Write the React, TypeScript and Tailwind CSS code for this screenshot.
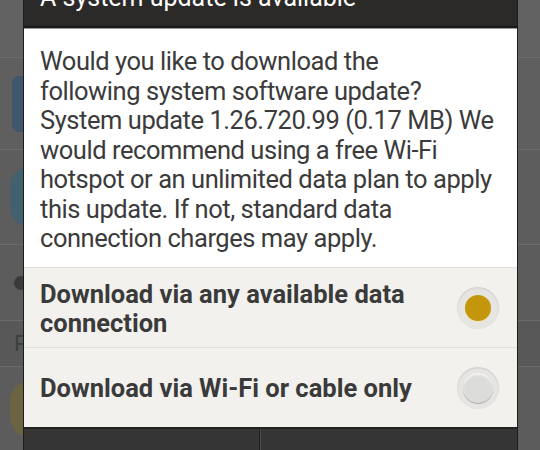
import React from "react";

const font = { fontFamily: "Roboto, 'Noto Sans', sans-serif" };

function BackgroundList() {
  return (
    <div className="flex h-full flex-col bg-[#5e5e5e]">
      <div className="h-[58px] border-b border-[#6c6c6c] bg-[#626262]" />
      <div className="flex h-[92px] items-center border-b border-[#6c6c6c] bg-[#5f5f5f] pl-[12px]">
        <div className="h-[56px] w-[40px] rounded-[8px] bg-[#3f566c]" />
      </div>
      <div className="flex h-[95px] items-center border-b border-[#6c6c6c] bg-[#5d5d5d] pl-[10px]">
        <div className="h-[60px] w-[40px] rounded-full bg-[#43606f]" />
      </div>
      <div className="flex h-[76px] items-center border-b border-[#6a6a6a] bg-[#5c5c5c] pl-[14px]">
        <div className="h-[14px] w-[14px] rounded-full bg-[#3a3a3a]" />
      </div>
      <div className="flex h-[46px] items-center border-b border-[#6a6a6a] bg-[#585858] pl-[14px] text-[22px] text-[#3e3e3e]" style={font}>
        P
      </div>
      <div className="flex flex-1 items-center bg-[#5c5c5c] pl-[10px]">
        <div className="h-[56px] w-[40px] rounded-full bg-[#6a6440]" />
      </div>
    </div>
  );
}

function Radio({ checked }: { checked: boolean }) {
  return (
    <div className="flex h-[42px] w-[42px] shrink-0 items-center justify-center rounded-full bg-[#e6e5e2] shadow-[inset_0_1px_2px_rgba(0,0,0,0.12)]">
      {checked ? (
        <div className="h-[26px] w-[26px] rounded-full bg-[#c3960b] shadow-[0_1px_0_#f2e3a6]" />
      ) : (
        <div className="h-[30px] w-[30px] rounded-full bg-[#dcdcdb] shadow-[0_1px_1px_rgba(0,0,0,0.25),inset_0_2px_2px_#f4f4f4]" />
      )}
    </div>
  );
}

export default function App() {
  return (
    <div className="relative h-[450px] w-[540px] overflow-hidden" style={font}>
      <BackgroundList />
      <div className="absolute inset-y-0 left-[23px] flex w-[495px] flex-col border-x border-[#1c1c1c] bg-white">
        <div className="h-[28px] shrink-0 overflow-hidden border-b-2 border-[#1a1a1a] bg-[#2c2a28] pl-[16px]">
          <div className="mt-[-14px] text-[25px] leading-[24px] text-white">A system update is available</div>
        </div>
        <div className="h-[1px] bg-[#9a9a9a]" />
        <div className="flex h-[238px] shrink-0 flex-col bg-white pl-[16px] pr-[20px] pt-[18px] text-[25.5px] leading-[29.5px] tracking-[-0.45px] text-[#3b3b3b]">
          <p>
            Would you like to download the
            <br />
            following system software update?
          </p>
          <p>
            System update 1.26.720.99 (0.17 MB) We would recommend using a free Wi-Fi hotspot or an unlimited data plan to apply this
            update. If not, standard data connection charges may apply.
          </p>
        </div>
        <div className="flex h-[81px] shrink-0 items-center justify-between border-y border-[#e2e1de] bg-[#f2f1ee] pl-[16px] pr-[18px]">
          <div className="pt-[3px] text-[25.5px] font-bold leading-[29px] text-[#3a3a3a]">
            Download via any available data
            <br />
            connection
          </div>
          <Radio checked />
        </div>
        <div className="flex h-[79px] shrink-0 items-center justify-between bg-[#f2f1ee] pl-[16px] pr-[18px]">
          <div className="pt-[2px] text-[25.5px] font-bold leading-[29px] text-[#3a3a3a]">Download via Wi-Fi or cable only</div>
          <Radio checked={false} />
        </div>
        <div className="flex flex-1 border-t-2 border-[#222] bg-[#353535]">
          <div className="w-[236px] border-r border-[#222]" />
          <div className="flex-1 border-l border-[#4a4a4a]" />
        </div>
      </div>
    </div>
  );
}
